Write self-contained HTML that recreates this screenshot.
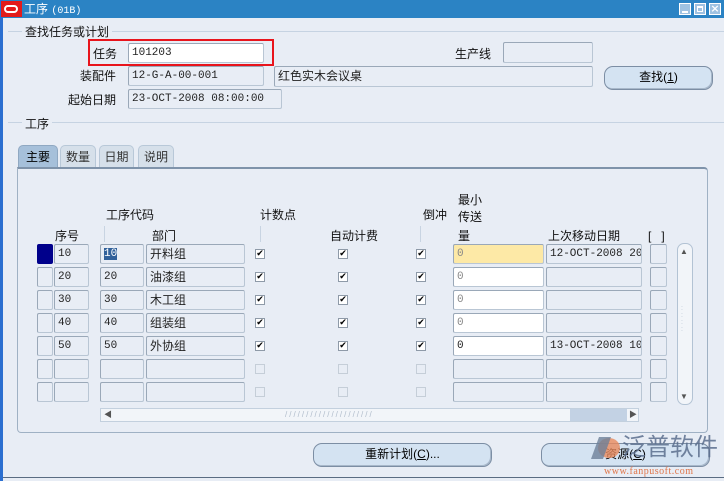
<!DOCTYPE html>
<html><head><meta charset="utf-8"><style>
*{margin:0;padding:0;box-sizing:border-box}
body{width:724px;height:481px;overflow:hidden;background:#e8edf5;font-family:"Liberation Mono","Noto Sans CJK SC",monospace;font-size:12px;color:#000;position:relative}
.a{position:absolute}
.t{position:absolute;font-family:"Liberation Sans","Noto Sans CJK SC",sans-serif;font-size:12px;white-space:nowrap;line-height:14px;color:#111}
.f{position:absolute;border:1px solid #b9c6d4;border-top-color:#9aa8b8;border-left-color:#9aa8b8;border-radius:2px;background:#e8edf5;font-size:11px;line-height:18px;padding-left:3px;white-space:nowrap;overflow:hidden;font-family:"Liberation Mono","Noto Sans CJK SC",monospace;color:#222}
.w{background:#fff}
.y{background:#fde9a6}
.cb{position:absolute;width:10px;height:10px;border:1px solid #8e9aa8;background:#fff;font-size:9px;line-height:8px;text-align:center;font-weight:bold;font-family:"DejaVu Sans",sans-serif}
.cb.d{border-color:#c5ced8;background:#e8edf5}
.btn{position:absolute;border:1px solid #7c8ea4;border-radius:9px;background:#d4e3f2;text-align:center;line-height:21px;font-family:"Liberation Sans","Noto Sans CJK SC",sans-serif;font-size:12px;box-shadow:inset -1px -1px 0 #a8b8ca}
.tab{position:absolute;top:145px;height:23px;border:1px solid #b8c8d8;border-bottom:none;border-radius:5px 5px 0 0;background:#d6e0ea;text-align:center;line-height:22px;font-family:"Liberation Sans","Noto Sans CJK SC",sans-serif;font-size:12px;color:#333}
</style></head><body>
<div class="a" style="left:0;top:0;width:724px;height:18px;background:#2b83c4"></div>
<div class="a" style="left:0;top:0;width:3px;height:481px;background:#2b6fd0"></div>
<div class="a" style="left:1px;top:1px;width:21px;height:16px;background:#e31b1b"></div>
<div class="a" style="left:4px;top:5px;width:14px;height:8px;border:2px solid #fff;border-radius:4px"></div>
<div class="t" style="left:24px;top:2px;color:#fff;font-size:12px">工序 <span style="font-size:10px;font-family:'Liberation Mono',monospace">(01B)</span></div>
<div class="a" style="left:679px;top:3px;width:12px;height:12px;background:#9fc2e2;border:1px solid #fff"><div class="a" style="left:2px;top:7px;width:6px;height:2px;background:#fff"></div></div>
<div class="a" style="left:694px;top:3px;width:12px;height:12px;background:#9fc2e2;border:1px solid #fff"><div class="a" style="left:2px;top:2px;width:6px;height:6px;border:1px solid #fff;border-top-width:2px"></div></div>
<div class="a" style="left:709px;top:3px;width:12px;height:12px;background:#9fc2e2;border:1px solid #fff;color:#fff;font-size:11px;line-height:10px;text-align:center;font-weight:bold;font-family:'DejaVu Sans',sans-serif">×</div>

<div class="a" style="left:8px;top:31px;width:716px;height:1px;background:#c6d3e2"></div>
<div class="t" style="left:22px;top:25px;background:#e8edf5;padding:0 3px">查找任务或计划</div>
<div class="a" style="left:88px;top:39px;width:186px;height:27px;border:2px solid #e8141c"></div>
<div class="t" style="left:93px;top:47px">任务</div>
<div class="f w" style="left:128px;top:43px;width:136px;height:20px">101203</div>
<div class="t" style="left:455px;top:47px">生产线</div>
<div class="f" style="left:503px;top:42px;width:90px;height:21px"></div>
<div class="t" style="left:80px;top:69px">装配件</div>
<div class="f" style="left:128px;top:66px;width:136px;height:20px">12-G-A-00-001</div>
<div class="f" style="left:274px;top:66px;width:319px;height:21px;font-family:'Liberation Sans','Noto Sans CJK SC',sans-serif;font-size:12px">红色实木会议桌</div>
<div class="btn" style="left:604px;top:66px;width:109px;height:24px">查找(<u>1</u>)</div>
<div class="t" style="left:68px;top:93px">起始日期</div>
<div class="f" style="left:128px;top:89px;width:154px;height:20px">23-OCT-2008 08:00:00</div>

<div class="a" style="left:8px;top:122px;width:716px;height:1px;background:#c6d3e2"></div>
<div class="t" style="left:22px;top:117px;background:#e8edf5;padding:0 3px">工序</div>

<div class="tab" style="left:18px;width:40px;background:#a6c0da;color:#000;border-color:#8fa8c2">主要</div>
<div class="tab" style="left:60px;width:36px">数量</div>
<div class="tab" style="left:99px;width:35px">日期</div>
<div class="tab" style="left:138px;width:36px">说明</div>
<div class="a" style="left:17px;top:167px;width:691px;height:266px;border:1px solid #9fb1c4;border-top:2px solid #7f93aa;border-radius:0 4px 4px 4px"></div>

<div class="t" style="left:106px;top:208px">工序代码</div>
<div class="t" style="left:260px;top:208px">计数点</div>
<div class="t" style="left:423px;top:208px">倒冲</div>
<div class="t" style="left:458px;top:193px">最小</div>
<div class="t" style="left:458px;top:210px">传送</div>
<div class="t" style="left:458px;top:229px">量</div>
<div class="t" style="left:55px;top:229px">序号</div>
<div class="t" style="left:152px;top:229px">部门</div>
<div class="t" style="left:330px;top:229px">自动计费</div>
<div class="t" style="left:548px;top:229px">上次移动日期</div>
<div class="t" style="left:648px;top:229px">[&nbsp;&nbsp;&nbsp;]</div>
<div class="a" style="left:104px;top:226px;width:1px;height:16px;background:#c8d4e2"></div>
<div class="a" style="left:260px;top:226px;width:1px;height:16px;background:#c8d4e2"></div>
<div class="a" style="left:420px;top:226px;width:1px;height:16px;background:#c8d4e2"></div>

<div class="a" style="left:37px;top:244px;width:16px;height:20px;background:#00008b;border-radius:2px"></div>
<div class="f" style="left:54px;top:244px;width:35px;height:20px">10</div>
<div class="f" style="left:100px;top:244px;width:44px;height:20px"><span style="background:#30609a;color:#fff">10</span></div>
<div class="f" style="left:146px;top:244px;width:99px;height:20px;font-family:'Liberation Sans','Noto Sans CJK SC',sans-serif;font-size:12px">开料组</div>
<div class="cb" style="left:255px;top:249px">✔</div><div class="cb" style="left:338px;top:249px">✔</div><div class="cb" style="left:416px;top:249px">✔</div>
<div class="f y" style="left:453px;top:244px;width:91px;height:20px;color:#888">0</div>
<div class="f" style="left:546px;top:244px;width:96px;height:20px">12-OCT-2008 20</div>
<div class="f" style="left:650px;top:244px;width:17px;height:20px"></div>

<div class="f" style="left:37px;top:267px;width:16px;height:20px"></div>
<div class="f" style="left:54px;top:267px;width:35px;height:20px">20</div>
<div class="f" style="left:100px;top:267px;width:44px;height:20px">20</div>
<div class="f" style="left:146px;top:267px;width:99px;height:20px;font-family:'Liberation Sans','Noto Sans CJK SC',sans-serif;font-size:12px">油漆组</div>
<div class="cb" style="left:255px;top:272px">✔</div><div class="cb" style="left:338px;top:272px">✔</div><div class="cb" style="left:416px;top:272px">✔</div>
<div class="f w" style="left:453px;top:267px;width:91px;height:20px;color:#888">0</div>
<div class="f" style="left:546px;top:267px;width:96px;height:20px"></div>
<div class="f" style="left:650px;top:267px;width:17px;height:20px"></div>

<div class="f" style="left:37px;top:290px;width:16px;height:20px"></div>
<div class="f" style="left:54px;top:290px;width:35px;height:20px">30</div>
<div class="f" style="left:100px;top:290px;width:44px;height:20px">30</div>
<div class="f" style="left:146px;top:290px;width:99px;height:20px;font-family:'Liberation Sans','Noto Sans CJK SC',sans-serif;font-size:12px">木工组</div>
<div class="cb" style="left:255px;top:295px">✔</div><div class="cb" style="left:338px;top:295px">✔</div><div class="cb" style="left:416px;top:295px">✔</div>
<div class="f w" style="left:453px;top:290px;width:91px;height:20px;color:#888">0</div>
<div class="f" style="left:546px;top:290px;width:96px;height:20px"></div>
<div class="f" style="left:650px;top:290px;width:17px;height:20px"></div>

<div class="f" style="left:37px;top:313px;width:16px;height:20px"></div>
<div class="f" style="left:54px;top:313px;width:35px;height:20px">40</div>
<div class="f" style="left:100px;top:313px;width:44px;height:20px">40</div>
<div class="f" style="left:146px;top:313px;width:99px;height:20px;font-family:'Liberation Sans','Noto Sans CJK SC',sans-serif;font-size:12px">组装组</div>
<div class="cb" style="left:255px;top:318px">✔</div><div class="cb" style="left:338px;top:318px">✔</div><div class="cb" style="left:416px;top:318px">✔</div>
<div class="f w" style="left:453px;top:313px;width:91px;height:20px;color:#888">0</div>
<div class="f" style="left:546px;top:313px;width:96px;height:20px"></div>
<div class="f" style="left:650px;top:313px;width:17px;height:20px"></div>

<div class="f" style="left:37px;top:336px;width:16px;height:20px"></div>
<div class="f" style="left:54px;top:336px;width:35px;height:20px">50</div>
<div class="f" style="left:100px;top:336px;width:44px;height:20px">50</div>
<div class="f" style="left:146px;top:336px;width:99px;height:20px;font-family:'Liberation Sans','Noto Sans CJK SC',sans-serif;font-size:12px">外协组</div>
<div class="cb" style="left:255px;top:341px">✔</div><div class="cb" style="left:338px;top:341px">✔</div><div class="cb" style="left:416px;top:341px">✔</div>
<div class="f w" style="left:453px;top:336px;width:91px;height:20px">0</div>
<div class="f" style="left:546px;top:336px;width:96px;height:20px">13-OCT-2008 10</div>
<div class="f" style="left:650px;top:336px;width:17px;height:20px"></div>

<div class="f" style="left:37px;top:359px;width:16px;height:20px"></div>
<div class="f" style="left:54px;top:359px;width:35px;height:20px"></div>
<div class="f" style="left:100px;top:359px;width:44px;height:20px"></div>
<div class="f" style="left:146px;top:359px;width:99px;height:20px"></div>
<div class="cb d" style="left:255px;top:364px"></div><div class="cb d" style="left:338px;top:364px"></div><div class="cb d" style="left:416px;top:364px"></div>
<div class="f" style="left:453px;top:359px;width:91px;height:20px"></div>
<div class="f" style="left:546px;top:359px;width:96px;height:20px"></div>
<div class="f" style="left:650px;top:359px;width:17px;height:20px"></div>

<div class="f" style="left:37px;top:382px;width:16px;height:20px"></div>
<div class="f" style="left:54px;top:382px;width:35px;height:20px"></div>
<div class="f" style="left:100px;top:382px;width:44px;height:20px"></div>
<div class="f" style="left:146px;top:382px;width:99px;height:20px"></div>
<div class="cb d" style="left:255px;top:387px"></div><div class="cb d" style="left:338px;top:387px"></div><div class="cb d" style="left:416px;top:387px"></div>
<div class="f" style="left:453px;top:382px;width:91px;height:20px"></div>
<div class="f" style="left:546px;top:382px;width:96px;height:20px"></div>
<div class="f" style="left:650px;top:382px;width:17px;height:20px"></div>

<div class="a" style="left:677px;top:243px;width:16px;height:162px;border:1px solid #b3c3d4;border-radius:7px;background:#f2f5f9"></div>
<div class="t" style="left:680px;top:245px;font-size:8px;color:#555">▲</div>
<div class="t" style="left:680px;top:390px;font-size:8px;color:#555">▼</div>
<div class="t" style="left:681px;top:305px;font-size:7px;line-height:7px;color:#b8c4d2">:<br>:<br>:<br>:</div>
<div class="a" style="left:100px;top:408px;width:539px;height:14px;border:1px solid #c3d0de;background:#f2f5f9"></div>
<div class="a" style="left:570px;top:409px;width:57px;height:12px;background:#c3d2e4"></div>
<div class="t" style="left:104px;top:408px;font-size:8px;color:#555">◀</div>
<div class="t" style="left:629px;top:408px;font-size:8px;color:#555">▶</div>
<div class="t" style="left:285px;top:408px;font-size:8px;color:#b0bccb;letter-spacing:2px">/////////////////////</div>

<div class="btn" style="left:313px;top:443px;width:179px;height:24px">重新计划(<u>C</u>)...</div>
<div class="btn" style="left:541px;top:443px;width:169px;height:24px">资源(<u>C</u>)</div>
<div class="a" style="left:598px;top:438px;width:22px;height:20px;border-radius:50%;background:#e88a5c;opacity:.8"></div>
<div class="a" style="left:595px;top:437px;width:12px;height:22px;background:#6d7f99;transform:skewX(-20deg);opacity:.8"></div>
<div class="t" style="left:622px;top:435px;font-size:24px;line-height:26px;color:#5c6f8e;opacity:.85">泛普软件</div>
<div class="t" style="left:604px;top:465px;font-size:10px;color:#e0764a;font-family:'Liberation Serif',serif;letter-spacing:.5px">www.fanpusoft.com</div>
<div class="a" style="left:3px;top:477px;width:721px;height:1px;background:#5a6c82"></div>
</body></html>
